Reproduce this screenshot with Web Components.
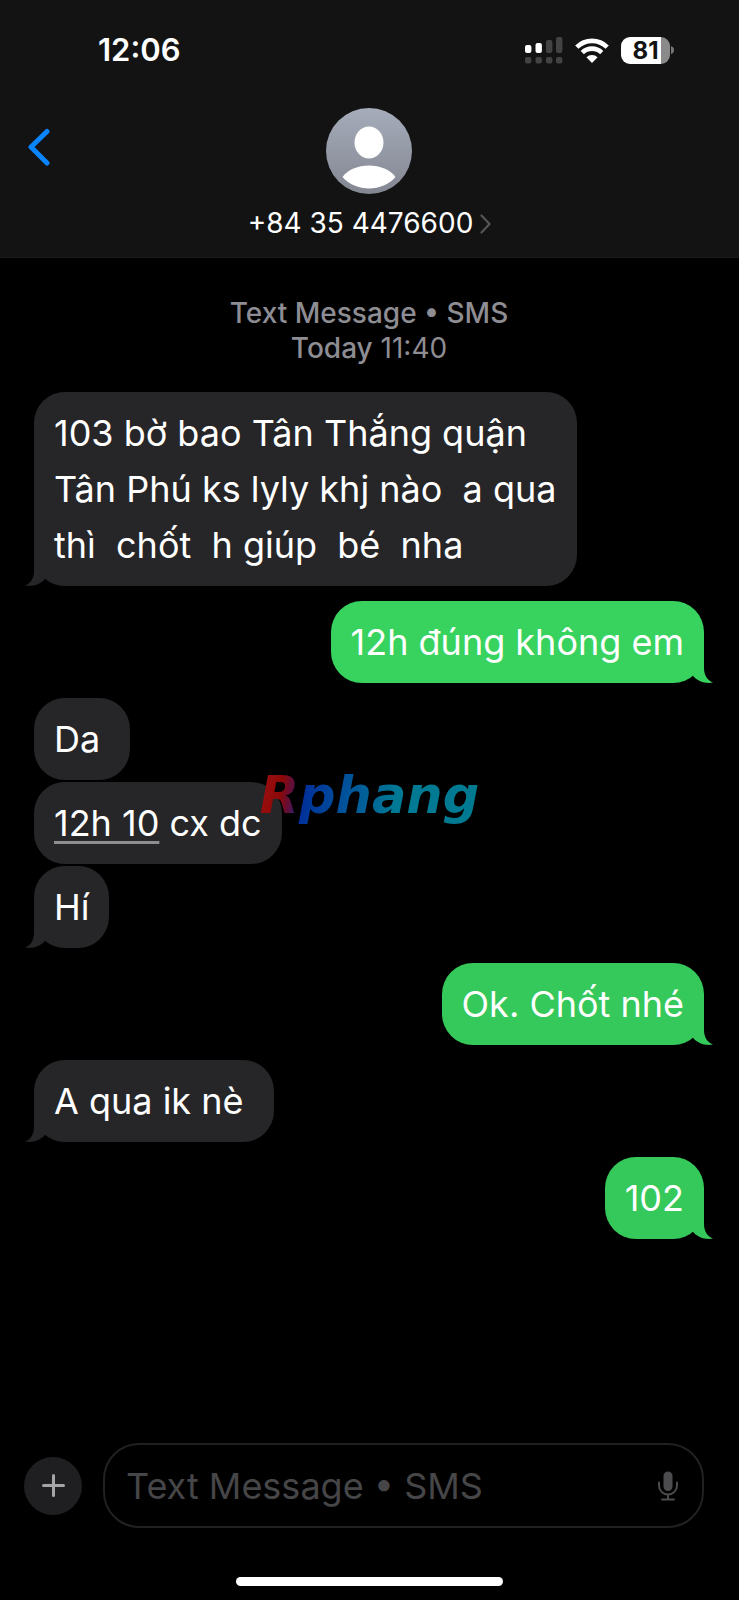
<!DOCTYPE html>
<html lang="vi">
<head>
<meta charset="utf-8">
<meta name="viewport" content="width=device-width, initial-scale=1">
<title>Messages</title>
<style>
  body { margin: 0; background: #000; color: #fff; font-family: Inter, "Noto Sans", sans-serif; }
</style>
</head>
<body>
<message-app>
  <chat-header slot="header">
    <status-bar slot="status" time="12:06" battery="81"></status-bar>
    +84 35 4476600
  </chat-header>
  <chat-stamp><span slot="service">Text Message • SMS</span><span slot="day">Today</span>11:40</chat-stamp>
  <message-group>
    <chat-bubble tail>103 bờ bao Tân Thắng quận Tân Phú ks lyly khj nào  a qua thì  chốt  h giúp  bé  nha</chat-bubble>
  </message-group>
  <message-group sent>
    <chat-bubble sent tail style="--fill: #38d35f">12h đúng không em</chat-bubble>
  </message-group>
  <message-group>
    <chat-bubble>Da&nbsp;</chat-bubble>
    <chat-bubble><time-link>12h 10</time-link> cx dc</chat-bubble>
    <chat-bubble tail>Hí</chat-bubble>
  </message-group>
  <message-group sent>
    <chat-bubble sent tail>Ok. Chốt nhé</chat-bubble>
  </message-group>
  <message-group>
    <chat-bubble tail>A qua ik nè&nbsp;</chat-bubble>
  </message-group>
  <message-group sent>
    <chat-bubble sent tail>102</chat-bubble>
  </message-group>
  <message-composer slot="footer" placeholder="Text Message • SMS"></message-composer>
  <brand-mark slot="overlay">Rphang</brand-mark>
</message-app>

<script>
const define = (name, render) => customElements.define(name, class extends HTMLElement {
  constructor() {
    super();
    this.attachShadow({ mode: "open" });
  }
  connectedCallback() {
    this.shadowRoot.innerHTML = render(this).trim();
  }
});

define("message-app", () => `
  <style>
    :host { display: flex; flex-direction: column; min-height: 100vh; position: relative; background: #000; }
    main { flex: 1; display: flex; flex-direction: column; gap: 15px; padding: 38px 35px 24px 34px; }
  </style>
  <slot name="header"></slot>
  <main><slot></slot></main>
  <slot name="footer"></slot>
  <slot name="overlay"></slot>`);

define("status-bar", el => `
  <style>
    :host { display: flex; align-items: center; justify-content: space-between; height: 36px; padding: 0 65px 0 98px; }
    time { font-size: 31px; font-weight: 600; line-height: 36px; }
    .icons { display: flex; align-items: center; gap: 12px; }
    .battery { display: flex; align-items: center; gap: 1px; }
    .level { width: 49px; height: 27px; border-radius: 9px; text-align: center;
      background: linear-gradient(90deg, #fff 82%, #8a8a8a 82%);
      color: #131313; font-size: 24px; font-weight: 700; line-height: 27px; box-sizing: border-box; }
    svg { display: block; }
  </style>
  <time>${el.getAttribute("time")}</time>
  <div class="icons">
    <svg width="38" height="27" viewBox="0 0 38 27" aria-hidden="true">
      <g fill="#fff"><rect x="0" y="8" width="6.4" height="8" rx="2"/><rect x="10.5" y="6" width="6.4" height="10" rx="2"/></g>
      <g fill="#434343"><rect x="21" y="3" width="6.4" height="13" rx="2"/><rect x="31" y="0" width="6.4" height="16" rx="2"/>
      <rect x="0" y="20" width="6.4" height="6.4" rx="2"/><rect x="10.5" y="20" width="6.4" height="6.4" rx="2"/>
      <rect x="21" y="20" width="6.4" height="6.4" rx="2"/><rect x="31" y="20" width="6.4" height="6.4" rx="2"/></g>
    </svg>
    <svg width="34" height="25" viewBox="0 0 34 25" aria-hidden="true">
      <g fill="none" stroke="#fff" stroke-width="4.6">
        <path d="M1.8 9.1A21.6 21.6 0 0 1 32.2 9.1"/>
        <path d="M7.3 14.6A13.8 13.8 0 0 1 26.7 14.6"/>
      </g>
      <path d="M17 25 L11.4 19.3 A8 8 0 0 1 22.6 19.3Z" fill="#fff"/>
    </svg>
    <div class="battery">
      <div class="level">${el.getAttribute("battery")}</div>
      <svg width="3" height="8" viewBox="0 0 3 8" aria-hidden="true"><path d="M0 0Q3 1 3 4T0 8Z" fill="#777"/></svg>
    </div>
  </div>`);

define("chat-header", () => `
  <style>
    :host { display: block; background: #131313; border-bottom: 1px solid #1a1a1b; }
    header { padding-top: 32px; }
    .bar { display: grid; grid-template-columns: 1fr auto 1fr; align-items: start; padding: 40px 24px 16px; }
    button { display: block; margin: 0; padding: 0; border: 0; background: none; color: inherit; font: inherit; cursor: pointer; }
    .back { padding: 20px 3px; justify-self: start; }
    .contact { display: flex; flex-direction: column; align-items: center; gap: 12px; }
    .name { display: flex; align-items: center; gap: 7px; font-size: 28px; line-height: 35px; }
    svg { display: block; }
  </style>
  <header>
    <slot name="status"></slot>
    <div class="bar">
      <button class="back" aria-label="Back">
        <svg width="24" height="38" viewBox="0 0 24 38"><path d="M20 3.5L4 19L20 35" fill="none" stroke="#0a84ff" stroke-width="5" stroke-linecap="round" stroke-linejoin="round"/></svg>
      </button>
      <button class="contact">
        <svg width="86" height="86" viewBox="0 0 86 86" aria-hidden="true">
          <defs><linearGradient id="g" x1="0" y1="0" x2="0" y2="1"><stop offset="0" stop-color="#a6acba"/><stop offset="1" stop-color="#838792"/></linearGradient></defs>
          <circle cx="43" cy="43" r="43" fill="url(#g)"/>
          <ellipse cx="43" cy="34.5" rx="14.5" ry="16" fill="#fff"/>
          <path d="M16.500 69C22 61.500 32 57.500 43 57.500S64 61.500 69.500 69C63 76.500 53 80.500 43 80.500S23 76.500 16.500 69Z" fill="#fff"/>
        </svg>
        <span class="name"><slot></slot>
          <svg width="11" height="20" viewBox="0 0 11 20" aria-hidden="true"><path d="M1.500 1.500L9.500 10L1.500 18.500" fill="none" stroke="#555557" stroke-width="2.200" stroke-linecap="round" stroke-linejoin="round"/></svg>
        </span>
      </button>
    </div>
  </header>`);

define("chat-stamp", () => `
  <style>
    :host { display: block; margin-bottom: 11px; text-align: center; color: #8e8d93; font-size: 28px; line-height: 35px; }
    div, b { font-weight: 500; }
  </style>
  <div><slot name="service"></slot></div>
  <time><b><slot name="day"></slot></b> <slot></slot></time>`);

define("message-group", el => `
  <style>
    :host { display: flex; flex-direction: column; gap: 2px; align-items: ${el.hasAttribute("sent") ? "flex-end" : "flex-start"}; }
  </style>
  <slot></slot>`);

define("chat-bubble", el => `
  <style>
    :host { display: block; position: relative; box-sizing: border-box; max-width: 81%; padding: 13px 20px; border-radius: 31px;
      background: var(--fill, #262628); font-size: 36px; line-height: 56px; }
    :host([sent]) { background: var(--fill, #35c85a); }
    slot { white-space: pre-wrap; }
    svg { position: absolute; bottom: 0; left: -9px; fill: var(--fill, #262628); }
    :host([sent]) svg { left: auto; right: -9px; fill: var(--fill, #35c85a); transform: scaleX(-1); }
  </style><slot></slot>${el.hasAttribute("tail") ? `<svg width="24" height="32" viewBox="0 0 24 32" aria-hidden="true"><path d="M9 0V17C9 24 6 29 0 31.500C8 33 15 30 19 26L24 20V0Z"/></svg>` : ""}`);

define("time-link", () => `
  <style>
    :host { display: inline; }
    a { color: inherit; text-decoration: underline #8e8e90 3px; text-underline-offset: 5px; text-decoration-skip-ink: none; }
  </style><a href="#"><slot></slot></a>`);

define("message-composer", el => `
  <style>
    :host { display: block; }
    form { display: flex; align-items: center; gap: 21px; padding: 0 35px 0 24px; }
    button { display: block; flex: none; margin: 0; padding: 0; border: 0; background: none; cursor: pointer; }
    .add { width: 58px; height: 58px; border-radius: 50%; background: #1f1f21; }
    .add svg { margin: auto; }
    .field { flex: 1; min-width: 0; display: flex; align-items: center; box-sizing: border-box; height: 85px; padding: 0 24px 0 21px;
      border: 2px solid #212123; border-radius: 36px; }
    input { flex: 1; min-width: 0; padding: 0; border: 0; outline: 0; background: none; color: #fff;
      font: inherit; font-size: 36px; line-height: 56px; height: 56px; }
    input::placeholder { color: #464648; opacity: 1; }
    svg { display: block; }
    .home { width: 36%; height: 9px; margin: 49px auto 14px; border-radius: 5px; background: #fff; }
  </style>
  <form>
    <button class="add" type="button" aria-label="Add">
      <svg width="23" height="23" viewBox="0 0 23 23"><path d="M11.500 1.500V21.500M1.500 11.500H21.500" stroke="#a5a5a7" stroke-width="3" stroke-linecap="round"/></svg>
    </button>
    <div class="field">
      <input type="text" aria-label="Message" placeholder="${el.getAttribute("placeholder")}">
      <button type="button" aria-label="Dictate">
        <svg width="20" height="30" viewBox="0 0 20 30"><rect x="5.500" y="0.500" width="9" height="19.500" rx="4.500" fill="#4c4c4e"/>
        <path d="M1 11.500V14.500A9 9 0 0 0 19 14.500V11.500M10 23.500V28M4 28.500H16" fill="none" stroke="#4c4c4e" stroke-width="2" stroke-linecap="round"/></svg>
      </button>
    </div>
  </form>
  <div class="home"></div>`);

define("brand-mark", () => `
  <style>
    :host { position: absolute; top: 50%; left: 50%; transform: translate(-50%, -50%); pointer-events: none;
      font: italic bold 51px/60px "DejaVu Sans", sans-serif; }
    span { display: block; padding: 0 4px 8px; color: transparent; -webkit-background-clip: text; background-clip: text;
      background-image: linear-gradient(100deg, #a31212 0, #8c0808 12%, #5c1040 17%, #00309a 22%, #00579a 42%, #007a94 62%, #007a90 100%); }
  </style><span><slot></slot></span>`);
</script>
</body>
</html>
